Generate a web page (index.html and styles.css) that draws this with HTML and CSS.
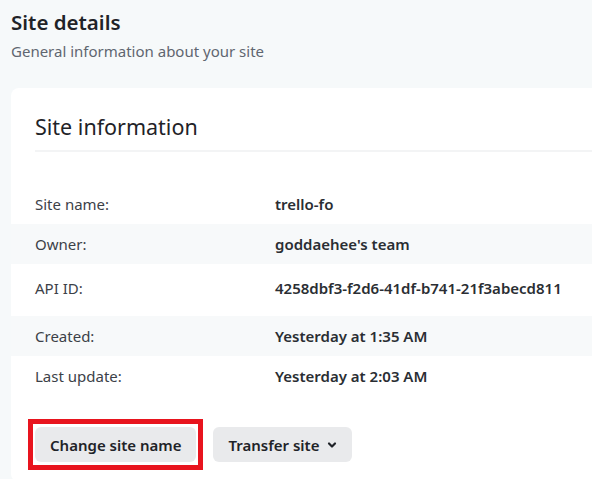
FILE: index.html
```html
<!DOCTYPE html>
<html>
<head>
<meta charset="utf-8">
<link rel="stylesheet" href="styles.css">
</head>
<body>
<div class="page">
  <header class="page-header">
    <h1 class="page-title">Site details</h1>
    <p class="page-subtitle">General information about your site</p>
  </header>
  <section class="card">
    <div class="card-header">
      <h2 class="card-title">Site information</h2>
    </div>
    <dl class="info-list">
      <div class="info-row">
        <dt class="info-label">Site name:</dt>
        <dd class="info-value">trello-fo</dd>
      </div>
      <div class="info-row shaded">
        <dt class="info-label">Owner:</dt>
        <dd class="info-value">goddaehee's team</dd>
      </div>
      <div class="info-row tall">
        <dt class="info-label">API ID:</dt>
        <dd class="info-value">4258dbf3-f2d6-41df-b741-21f3abecd811</dd>
      </div>
      <div class="info-row shaded">
        <dt class="info-label">Created:</dt>
        <dd class="info-value">Yesterday at 1:35 AM</dd>
      </div>
      <div class="info-row">
        <dt class="info-label">Last update:</dt>
        <dd class="info-value">Yesterday at 2:03 AM</dd>
      </div>
    </dl>
    <div class="actions">
      <div class="highlight">
        <button class="btn">Change site name</button>
      </div>
      <button class="btn">Transfer site
        <svg class="chev" viewBox="0 0 10 10" width="10" height="10"><path d="M2 3.5 L5 6.5 L8 3.5" fill="none" stroke="#1f2328" stroke-width="2.2" stroke-linecap="round" stroke-linejoin="round"/></svg>
      </button>
    </div>
  </section>
</div>
</body>
</html>
```
FILE: styles.css
```css
html, body {
  margin: 0;
  padding: 0;
  background: #f6f9fa;
  overflow: hidden;
}
body {
  font-family: "Noto Sans", "Open Sans", sans-serif;
  color: #1f2328;
}
.page {
  padding: 0 0 0 11px;
}
.page-header {
  padding-top: 7px;
}
.page-title {
  margin: 0;
  font-size: 20.5px;
  font-weight: 600;
  line-height: 30px;
  color: #1f2328;
}
.page-subtitle {
  margin: 0;
  margin-top: 1px;
  font-size: 15px;
  line-height: 26px;
  color: #5f6670;
}
.card {
  margin-top: 24px;
  width: 640px;
  background: #ffffff;
  border-radius: 8px;
  padding: 0 0 12px 24px;
}
.card-header {
  padding-top: 22px;
  height: 40px;
  border-bottom: 2px solid #f3f4f5;
}
.card-title {
  margin: 0;
  font-size: 21.5px;
  font-weight: 400;
  line-height: 34px;
  color: #1f2328;
}
.info-list {
  margin: 32px 0 0 -24px;
  padding: 0;
}
.info-row {
  display: flex;
  align-items: center;
  height: 40px;
  padding-left: 24px;
  box-sizing: border-box;
}
.info-row.tall {
  height: 52px;
  padding-bottom: 4px;
}
.info-row.shaded {
  background: #f7f9fa;
}
.info-label {
  width: 240px;
  margin: 0;
  font-size: 15px;
  color: #3c4148;
}
.info-value {
  margin: 0;
  font-size: 15px;
  font-weight: 600;
  color: #2a2e33;
}
.actions {
  display: flex;
  align-items: center;
  gap: 10px;
  margin-top: 23px;
  margin-left: -7px;
}
.highlight {
  border: 5px solid #e8141e;
  padding: 3px 2px;
  display: flex;
}
.btn {
  font-family: inherit;
  font-size: 15px;
  font-weight: 600;
  color: #1f2328;
  background: #e9eaec;
  border: none;
  border-radius: 6px;
  height: 35px;
  padding: 0 15px;
  display: inline-flex;
  align-items: center;
  gap: 8px;
}
.chev {
  display: block;
}
```
